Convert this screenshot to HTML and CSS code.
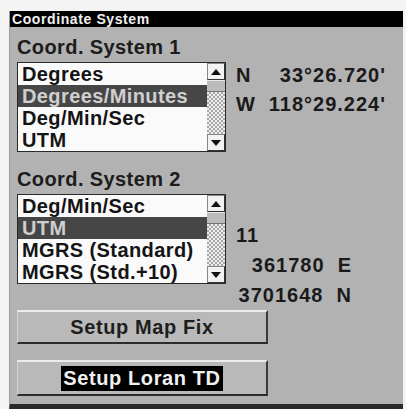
FILE: index.html
```html
<!DOCTYPE html>
<html lang="en">
<head>
<meta charset="UTF-8">
<meta name="viewport" content="width=device-width, initial-scale=1.0">
<title>Coordinate System</title>
<link rel="stylesheet" href="styles.css">
</head>
<body>

<div class="screen">
  <div class="title-bar">Coordinate System</div>
  <div class="panel">

    <div class="label">Coord. System 1</div>
    <div class="section">
      <div class="list">
        <div class="items">
          <div class="item">Degrees</div>
          <div class="item selected">Degrees/Minutes</div>
          <div class="item">Deg/Min/Sec</div>
          <div class="item">UTM</div>
        </div>
        <div class="scrollbar">
          <div class="arrow"><svg width="10" height="6" viewBox="0 0 10 6"><polygon points="5,0 10,6 0,6" fill="#111"/></svg></div>
          <div class="thumb"></div>
          <div class="track"></div>
          <div class="arrow"><svg width="10" height="6" viewBox="0 0 10 6"><polygon points="0,0 10,0 5,6" fill="#111"/></svg></div>
        </div>
      </div>
      <div class="readout readout-latlon">
        <div class="line"><span>N</span><span>33°26.720'</span></div>
        <div class="line"><span>W</span><span>118°29.224'</span></div>
      </div>
    </div>

    <div class="label label-second">Coord. System 2</div>
    <div class="section">
      <div class="list">
        <div class="items">
          <div class="item">Deg/Min/Sec</div>
          <div class="item selected">UTM</div>
          <div class="item">MGRS (Standard)</div>
          <div class="item">MGRS (Std.+10)</div>
        </div>
        <div class="scrollbar">
          <div class="arrow"><svg width="10" height="6" viewBox="0 0 10 6"><polygon points="5,0 10,6 0,6" fill="#111"/></svg></div>
          <div class="thumb"></div>
          <div class="track"></div>
          <div class="arrow"><svg width="10" height="6" viewBox="0 0 10 6"><polygon points="0,0 10,0 5,6" fill="#111"/></svg></div>
        </div>
      </div>
      <div class="readout readout-utm">
        <div class="zone">11</div>
        <div class="utm-line">361780&nbsp;&nbsp;E</div>
        <div class="utm-line">3701648&nbsp;&nbsp;N</div>
      </div>
    </div>

    <button type="button" class="btn btn-map">Setup Map Fix</button>
    <button type="button" class="btn btn-loran"><span class="focus">Setup Loran TD</span></button>

  </div>
</div>

</body>
</html>
```

FILE: styles.css
```css
body {
  margin: 0;
  background-color: #f4f4f4;
  font-family: "Liberation Sans", Arial, sans-serif;
}
.screen {
  margin: 11px 3px 0 9px;
  width: 394px;
  height: 398px;
  display: flex;
  flex-direction: column;
  background-color: #b2b2b2;
  border-left: 1px solid #9a9a9a;
  border-bottom: 5px solid #2a2a2a;
  box-sizing: border-box;
  overflow: hidden;
}
.title-bar {
  height: 16px;
  background-color: #000;
  color: #f2f2f2;
  font-size: 14px;
  font-weight: bold;
  line-height: 16px;
  letter-spacing: 0.6px;
  padding-left: 2px;
}
.panel {
  flex: 1;
  padding: 9px 0 0 7px;
  display: flex;
  flex-direction: column;
  align-items: flex-start;
}
.label {
  font-size: 20px;
  font-weight: bold;
  line-height: 22px;
  color: #1c1c1c;
  letter-spacing: 0.4px;
}
.label-second {
  margin-top: 16px;
}
.section {
  display: flex;
  align-items: flex-start;
  margin-top: 4px;
}
.list {
  width: 209px;
  display: flex;
  border: 1px solid #2a2a2a;
  background-color: #fafafa;
  box-sizing: border-box;
}
.items {
  flex: 1;
}
.item {
  height: 22px;
  padding-left: 4px;
  font-size: 20px;
  font-weight: bold;
  line-height: 22px;
  color: #141414;
  letter-spacing: 0.4px;
  white-space: nowrap;
}
.item.selected {
  background-color: #464646;
  color: #cfcfcf;
}
.scrollbar {
  width: 18px;
  display: flex;
  flex-direction: column;
}
.arrow {
  height: 17px;
  display: flex;
  align-items: center;
  justify-content: center;
  background-color: #f2f2f2;
  border: 1px solid #333;
  border-top-color: #888;
  border-left-color: #888;
  box-sizing: border-box;
}
.thumb {
  height: 12px;
  background-color: #bcbcbc;
  border-top: 1px solid #e8e8e8;
  border-bottom: 1px solid #777;
  box-sizing: border-box;
}
.track {
  flex: 1;
  background: repeating-conic-gradient(#a8a8a8 0 25%, #ededed 0 50%) 0 0 / 4px 4px;
}
.readout {
  margin-left: 10px;
  font-size: 20px;
  font-weight: bold;
  line-height: 22px;
  color: #1a1a1a;
  letter-spacing: 1px;
}
.readout-latlon {
  width: 150px;
  padding-top: 2px;
  display: flex;
  flex-direction: column;
  gap: 7px;
}
.line {
  display: flex;
  justify-content: space-between;
}
.readout-utm {
  width: 116px;
  padding-top: 30px;
  display: flex;
  flex-direction: column;
  gap: 8px;
}
.utm-line {
  text-align: right;
}
.btn {
  width: 251px;
  background-color: #b9b9b9;
  border: none;
  border-top: 2px solid #ececec;
  border-left: 1px solid #d4d4d4;
  border-right: 2px solid #3a3a3a;
  border-bottom: 2px solid #2c2c2c;
  font-family: "Liberation Sans", Arial, sans-serif;
  font-size: 20px;
  font-weight: bold;
  color: #1e1e1e;
  letter-spacing: 0.6px;
  padding: 0;
  box-sizing: border-box;
}
.btn-map {
  height: 34px;
  margin-top: 4px;
}
.btn-loran {
  height: 36px;
  margin-top: 16px;
}
.focus {
  display: inline-block;
  background-color: #000;
  color: #f0f0f0;
  padding: 1px 2px;
  line-height: 23px;
}
```
